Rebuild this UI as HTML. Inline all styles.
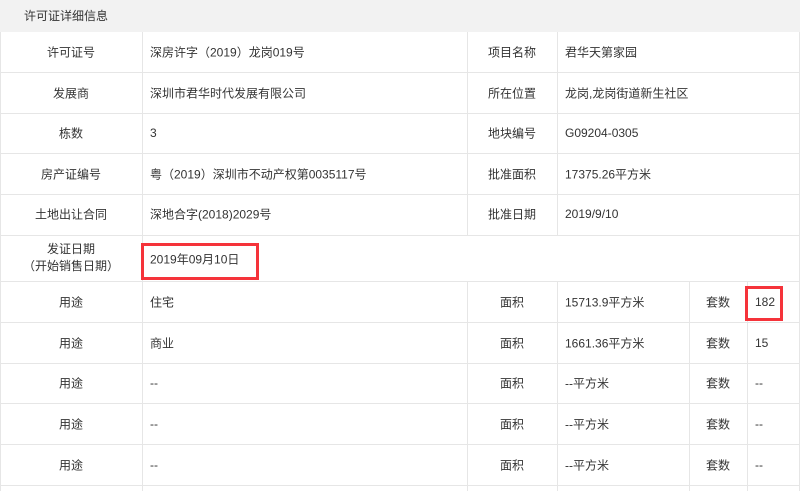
<!DOCTYPE html>
<html><head><meta charset="utf-8"><style>
*{margin:0;padding:0;box-sizing:border-box}
body{width:800px;height:491px;overflow:hidden;background:#fff;font-family:"Liberation Sans","Noto Sans CJK SC",sans-serif;font-size:12px;color:#333;position:relative}
.hd{position:absolute;left:0;top:0;width:800px;height:32px;background:#f2f2f2;padding-left:24px;line-height:32px}
.h{position:absolute;left:0;width:800px;height:1px;background:#e6e6e6}
.v{position:absolute;width:1px;background:#e6e6e6}
.t{position:absolute;white-space:nowrap;transform:translateY(-50%)}
.c{text-align:center;transform:translate(-50%,-50%)}
.red{position:absolute;border:3px solid #f5333a}
</style></head><body>
<div class="hd">许可证详细信息</div>
<div class="v" style="left:0;top:32px;height:459px"></div>
<div class="v" style="left:142px;top:32px;height:459px"></div>
<div class="v" style="left:467px;top:32px;height:203px"></div>
<div class="v" style="left:557px;top:32px;height:203px"></div>
<div class="v" style="left:467px;top:281px;height:210px"></div>
<div class="v" style="left:557px;top:281px;height:210px"></div>
<div class="v" style="left:689px;top:281px;height:210px"></div>
<div class="v" style="left:747px;top:281px;height:210px"></div>
<div class="v" style="left:799px;top:32px;height:459px"></div>
<div class="h" style="top:72px"></div><div class="h" style="top:113px"></div><div class="h" style="top:153px"></div><div class="h" style="top:194px"></div><div class="h" style="top:235px"></div><div class="h" style="top:281px"></div><div class="h" style="top:322px"></div><div class="h" style="top:363px"></div><div class="h" style="top:403px"></div><div class="h" style="top:444px"></div><div class="h" style="top:485px"></div>

<div class="t c" style="left:71px;top:52px">许可证号</div><div class="t" style="left:150px;top:52px">深房许字（2019）龙岗019号</div>
<div class="t c" style="left:512px;top:52px">项目名称</div><div class="t" style="left:565px;top:52px">君华天第家园</div>
<div class="t c" style="left:71px;top:93px">发展商</div><div class="t" style="left:150px;top:93px">深圳市君华时代发展有限公司</div>
<div class="t c" style="left:512px;top:93px">所在位置</div><div class="t" style="left:565px;top:93px">龙岗,龙岗街道新生社区</div>
<div class="t c" style="left:71px;top:133px">栋数</div><div class="t" style="left:150px;top:133px">3</div>
<div class="t c" style="left:512px;top:133px">地块编号</div><div class="t" style="left:565px;top:133px">G09204-0305</div>
<div class="t c" style="left:71px;top:174px">房产证编号</div><div class="t" style="left:150px;top:174px">粤（2019）深圳市不动产权第0035117号</div>
<div class="t c" style="left:512px;top:174px">批准面积</div><div class="t" style="left:565px;top:174px">17375.26平方米</div>
<div class="t c" style="left:71px;top:214px">土地出让合同</div><div class="t" style="left:150px;top:214px">深地合字(2018)2029号</div>
<div class="t c" style="left:512px;top:214px">批准日期</div><div class="t" style="left:565px;top:214px">2019/9/10</div>
<div class="t c" style="left:71px;top:258px;line-height:17px">发证日期<br>（开始销售日期）</div>
<div class="t" style="left:150px;top:259px">2019年09月10日</div>
<div class="red" style="left:141px;top:243px;width:118px;height:37px"></div>

<div class="t c" style="left:71px;top:302px">用途</div><div class="t" style="left:150px;top:302px">住宅</div>
<div class="t c" style="left:512px;top:302px">面积</div><div class="t" style="left:565px;top:302px">15713.9平方米</div>
<div class="t c" style="left:718px;top:302px">套数</div><div class="t" style="left:755px;top:302px">182</div>
<div class="red" style="left:745px;top:286px;width:38px;height:35px"></div>

<div class="t c" style="left:71px;top:343px">用途</div><div class="t" style="left:150px;top:343px">商业</div>
<div class="t c" style="left:512px;top:343px">面积</div><div class="t" style="left:565px;top:343px">1661.36平方米</div>
<div class="t c" style="left:718px;top:343px">套数</div><div class="t" style="left:755px;top:343px">15</div>

<div class="t c" style="left:71px;top:383px">用途</div><div class="t" style="left:150px;top:383px">--</div>
<div class="t c" style="left:512px;top:383px">面积</div><div class="t" style="left:565px;top:383px">--平方米</div>
<div class="t c" style="left:718px;top:383px">套数</div><div class="t" style="left:755px;top:383px">--</div>

<div class="t c" style="left:71px;top:424px">用途</div><div class="t" style="left:150px;top:424px">--</div>
<div class="t c" style="left:512px;top:424px">面积</div><div class="t" style="left:565px;top:424px">--平方米</div>
<div class="t c" style="left:718px;top:424px">套数</div><div class="t" style="left:755px;top:424px">--</div>

<div class="t c" style="left:71px;top:465px">用途</div><div class="t" style="left:150px;top:465px">--</div>
<div class="t c" style="left:512px;top:465px">面积</div><div class="t" style="left:565px;top:465px">--平方米</div>
<div class="t c" style="left:718px;top:465px">套数</div><div class="t" style="left:755px;top:465px">--</div>
</body></html>
